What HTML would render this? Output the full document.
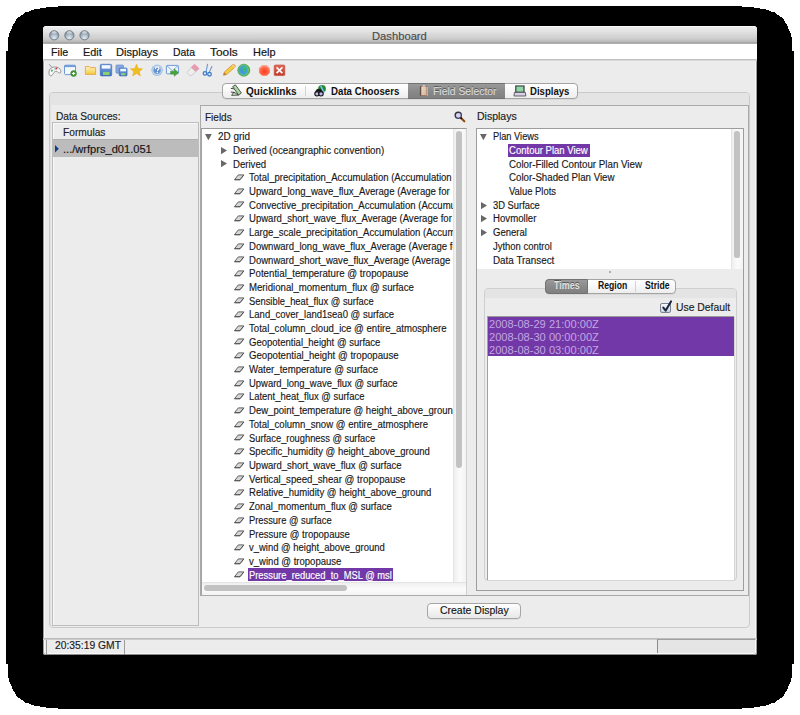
<!DOCTYPE html>
<html><head><meta charset="utf-8"><title>Dashboard</title><style>
html,body{margin:0;padding:0;background:#fff;width:800px;height:715px;overflow:hidden;position:relative;}
.b{position:absolute;box-sizing:border-box;}
.t{position:absolute;white-space:nowrap;line-height:1;font-family:"Liberation Sans",sans-serif;transform-origin:0 0;}
svg{position:absolute;overflow:visible;}
</style></head><body>
<svg style="left:0;top:0" width="800" height="715" shape-rendering="crispEdges"><path d="M58 6H742V7H754V8H760V9H766V10H769V11H771V12H775V13H776V14H777V15H779V16H780V17H782V18H783V19H784V21H785V23H786V24H787V26H788V29H789V31H790V33H791V37H792V51H794V664H792V678H791V682H790V684H789V686H788V689H787V691H786V692H785V694H784V696H783V697H782V698H780V699H779V700H777V701H776V702H775V703H771V704H769V705H766V706H760V707H754V708H742V709H58V708H46V707H40V706H34V705H31V704H29V703H25V702H24V701H23V700H21V699H20V698H18V697H17V696H16V694H15V692H14V691H13V689H12V686H11V684H10V682H9V678H8V664H6V51H8V37H9V33H10V31H11V29H12V26H13V24H14V23H15V21H16V19H17V18H18V17H20V16H21V15H23V14H24V13H25V12H29V11H31V10H34V9H40V8H46V7H58V6Z" fill="#000"/></svg>
<div class="b" style="left:43.00px;top:26.00px;width:714.00px;height:629.00px;background:#ececec;border-radius:4px 4px 3px 3px;box-shadow:inset 1px 0 0 #9a9a9a,inset -1px 0 0 #9a9a9a,inset 0 -1px 0 #8a8a8a,inset 2px 0 0 #f8f8f8,inset -2px 0 0 #f8f8f8,inset 0 -2px 0 #f8f8f8;"></div>
<div class="b" style="left:43.00px;top:26.00px;width:714.00px;height:18.00px;background:linear-gradient(#f0f0f0 0,#e2e2e2 30%,#cdcdcd 70%,#b9b9b9 88%,#a6a6a6 92%,#b4b4b4 100%);border-radius:4px 4px 0 0;box-shadow:inset 0 1px 0 #f8f8f8;"></div>
<svg style="left:0;top:0" width="100" height="44"><defs><radialGradient id="tl" cx=".5" cy=".78" r=".62"><stop offset="0" stop-color="#e4ebf1"/><stop offset=".55" stop-color="#b0bfcb"/><stop offset="1" stop-color="#8796a3"/></radialGradient><linearGradient id="tlh" x1="0" y1="0" x2="0" y2="1"><stop offset="0" stop-color="#fff" stop-opacity=".85"/><stop offset="1" stop-color="#fff" stop-opacity="0"/></linearGradient></defs><circle cx="54.2" cy="35.3" r="4.6" fill="url(#tl)" stroke="#6b7884" stroke-width="0.9"/><ellipse cx="54.2" cy="32.9" rx="2.6" ry="1.6" fill="url(#tlh)"/><circle cx="69.4" cy="35.3" r="4.6" fill="url(#tl)" stroke="#6b7884" stroke-width="0.9"/><ellipse cx="69.4" cy="32.9" rx="2.6" ry="1.6" fill="url(#tlh)"/><circle cx="84.5" cy="35.3" r="4.6" fill="url(#tl)" stroke="#6b7884" stroke-width="0.9"/><ellipse cx="84.5" cy="32.9" rx="2.6" ry="1.6" fill="url(#tlh)"/></svg>
<div class="t" style="left:372.30px;top:31px;font-size:11.5px;color:#4a4a4a;transform:scaleX(0.9745);-webkit-text-stroke:0.15px currentColor;">Dashboard</div>
<div class="b" style="left:43.00px;top:44.00px;width:714.00px;height:15.00px;background:#fff;"></div>
<div class="b" style="left:43.00px;top:59.00px;width:714.00px;height:1.00px;background:#c2c2c2;"></div>
<div class="b" style="left:43.00px;top:60.00px;width:714.00px;height:1.00px;background:#d8d8d8;"></div>
<div class="t" style="left:50.70px;top:47px;font-size:11.8px;color:#151515;transform:scaleX(0.9080);-webkit-text-stroke:0.15px currentColor;-webkit-text-stroke:0.2px #151515;">File</div>
<div class="t" style="left:82.95px;top:47px;font-size:11.8px;color:#151515;transform:scaleX(0.9211);-webkit-text-stroke:0.15px currentColor;-webkit-text-stroke:0.2px #151515;">Edit</div>
<div class="t" style="left:116.25px;top:47px;font-size:11.8px;color:#151515;transform:scaleX(0.9416);-webkit-text-stroke:0.15px currentColor;-webkit-text-stroke:0.2px #151515;">Displays</div>
<div class="t" style="left:173.25px;top:47px;font-size:11.8px;color:#151515;transform:scaleX(0.8835);-webkit-text-stroke:0.15px currentColor;-webkit-text-stroke:0.2px #151515;">Data</div>
<div class="t" style="left:210.00px;top:47px;font-size:11.8px;color:#151515;transform:scaleX(1.0071);-webkit-text-stroke:0.15px currentColor;-webkit-text-stroke:0.2px #151515;">Tools</div>
<div class="t" style="left:252.75px;top:47px;font-size:11.8px;color:#151515;transform:scaleX(0.9279);-webkit-text-stroke:0.15px currentColor;-webkit-text-stroke:0.2px #151515;">Help</div>
<div class="b" style="left:49.00px;top:92.00px;width:701.00px;height:536.00px;border:1px solid #cacaca;border-radius:4px;background:#ececec;box-shadow:inset 1px 1px 1px rgba(0,0,0,.05);"></div>
<div class="b" style="left:50.00px;top:93.00px;width:699.00px;height:12.00px;background:#e4e4e4;border-radius:3px 3px 0 0;"></div>
<div class="b" style="left:222.00px;top:83.00px;width:356.00px;height:16.00px;border:1px solid #a4a4a4;border-radius:4px;background:linear-gradient(#ffffff,#f7f7f7 50%,#ededed);box-shadow:0 0.5px 0.6px rgba(0,0,0,.10);"></div>
<div class="b" style="left:408.00px;top:83.00px;width:97.00px;height:16.00px;background:linear-gradient(#9a9a9a,#8a8a8a 50%,#808080);border-top:1px solid #727272;border-bottom:1px solid #727272;"></div>
<div class="b" style="left:305.00px;top:86.00px;width:1.00px;height:10.00px;background:#d2d2d2;"></div>
<div class="t" style="left:245.60px;top:87px;font-size:10.3px;color:#111;font-weight:bold;transform:scaleX(0.9718);-webkit-text-stroke:0.15px currentColor;-webkit-text-stroke:0;">Quicklinks</div>
<div class="t" style="left:330.60px;top:87px;font-size:10.3px;color:#111;font-weight:bold;transform:scaleX(0.9406);-webkit-text-stroke:0.15px currentColor;-webkit-text-stroke:0;">Data Choosers</div>
<div class="t" style="left:433.00px;top:87px;font-size:10.4px;color:#dadada;-webkit-text-stroke:0.15px currentColor;text-shadow:0 -0.6px 0 #555;">Field Selector</div>
<div class="t" style="left:530.00px;top:87px;font-size:10.3px;color:#111;font-weight:bold;transform:scaleX(0.9296);-webkit-text-stroke:0.15px currentColor;-webkit-text-stroke:0;">Displays</div>
<div class="t" style="left:56.00px;top:112px;font-size:10.3px;color:#202020;transform:scaleX(0.9885);-webkit-text-stroke:0.15px currentColor;">Data Sources:</div>
<div class="b" style="left:52.00px;top:122.00px;width:147.00px;height:504.00px;border:1px solid #bdbdbd;background:#ececec;box-shadow:inset 1px 1px 0 #f8f8f8;"></div>
<div class="t" style="left:62.50px;top:128px;font-size:10.3px;color:#202020;transform:scaleX(0.9895);-webkit-text-stroke:0.15px currentColor;">Formulas</div>
<div class="b" style="left:53.00px;top:139.00px;width:145.00px;height:18.00px;background:#bcbcbc;border-top:1px solid #b0b0b0;"></div>
<svg style="left:55px;top:145px" width="4" height="8"><path d="M0 0L3.8 3.75L0 7.5Z" fill="#133c86"/></svg>
<div class="t" style="left:62.50px;top:145px;font-size:10.3px;color:#151515;transform:scaleX(1.0764);-webkit-text-stroke:0.15px currentColor;">.../wrfprs_d01.051</div>
<div class="b" style="left:200.00px;top:105.00px;width:549.00px;height:491.00px;border:1px solid #a9a9a9;background:#ececec;"></div>
<div class="t" style="left:204.75px;top:113px;font-size:10.2px;color:#202020;transform:scaleX(0.9822);-webkit-text-stroke:0.15px currentColor;">Fields</div>
<div class="t" style="left:476.70px;top:112px;font-size:10.2px;color:#202020;transform:scaleX(1.0323);-webkit-text-stroke:0.15px currentColor;">Displays</div>
<div class="b" style="left:201.00px;top:128.00px;width:266.00px;height:467.00px;border-top:1px solid #9a9a9a;border-left:1px solid #a3a3a3;border-right:1px solid #d0d0d0;background:#fff;"></div>
<div class="b" style="left:453.00px;top:129.00px;width:13.00px;height:453.00px;background:linear-gradient(90deg,#efefef,#fbfbfb 50%,#f3f3f3);border-left:1px solid #e4e4e4;"></div>
<div class="b" style="left:456.00px;top:130.50px;width:6.00px;height:337.50px;background:#c2c2c2;border-radius:3px;"></div>
<div class="b" style="left:202.00px;top:582.00px;width:264.00px;height:13.00px;background:linear-gradient(#efefef,#fbfbfb 50%,#f3f3f3);border-top:1px solid #e4e4e4;"></div>
<div class="b" style="left:204.00px;top:585.00px;width:143.00px;height:6.00px;background:#c2c2c2;border-radius:3px;"></div>
<div class="b" style="left:476.00px;top:128.00px;width:268.00px;height:463.00px;border:1px solid #9d9d9d;background:#ececec;"></div>
<div class="b" style="left:477.00px;top:129.00px;width:266.00px;height:140.00px;background:#fff;"></div>
<div class="b" style="left:731.00px;top:129.00px;width:12.00px;height:140.00px;background:linear-gradient(90deg,#efefef,#fbfbfb 50%,#f3f3f3);border-left:1px solid #e4e4e4;"></div>
<div class="b" style="left:734.00px;top:130.50px;width:6.00px;height:127.50px;background:#c2c2c2;border-radius:2.5px;"></div>
<div class="b" style="left:608.50px;top:271.00px;width:2.00px;height:2.00px;background:#9a9a9a;border-radius:1px;"></div>
<div class="b" style="left:484.00px;top:288.00px;width:253.00px;height:293.00px;border:1px solid #cfcfcf;border-radius:4px;background:#ececec;"></div>
<div class="b" style="left:485.00px;top:289.00px;width:251.00px;height:9.00px;background:#e4e4e4;border-radius:3px 3px 0 0;"></div>
<div class="b" style="left:545.00px;top:279.00px;width:131.00px;height:15.00px;border:1px solid #a4a4a4;border-radius:4px;background:linear-gradient(#ffffff,#f7f7f7 50%,#ededed);box-shadow:0 0.5px 0.6px rgba(0,0,0,.10);"></div>
<div class="b" style="left:545.00px;top:279.00px;width:43.00px;height:15.00px;background:linear-gradient(#9a9a9a,#8a8a8a 50%,#808080);border:1px solid #727272;border-radius:4px 0 0 4px;"></div>
<div class="b" style="left:635.00px;top:281.00px;width:1.00px;height:11.00px;background:#d2d2d2;"></div>
<div class="t" style="left:553.65px;top:281px;font-size:10.2px;color:#e2e2e2;font-weight:bold;transform:scaleX(0.8796);-webkit-text-stroke:0.15px currentColor;-webkit-text-stroke:0;text-shadow:0 -0.6px 0 #555;">Times</div>
<div class="t" style="left:597.75px;top:281px;font-size:10.2px;color:#111;font-weight:bold;transform:scaleX(0.8459);-webkit-text-stroke:0.15px currentColor;-webkit-text-stroke:0;">Region</div>
<div class="t" style="left:644.65px;top:281px;font-size:10.2px;color:#111;font-weight:bold;transform:scaleX(0.8473);-webkit-text-stroke:0.15px currentColor;-webkit-text-stroke:0;">Stride</div>
<div class="b" style="left:660.00px;top:303.00px;width:11.00px;height:10.00px;border:1px solid #7b8591;border-radius:2px;background:linear-gradient(#f7f9fc,#cbd5e0);"></div>
<svg style="left:661px;top:299.5px" width="12" height="13"><path d="M2.3 7.6L4.7 10.6L10 1.4" stroke="#18253d" stroke-width="2" fill="none" stroke-linecap="round" stroke-linejoin="round"/></svg>
<div class="t" style="left:676.00px;top:303px;font-size:10.4px;color:#202020;transform:scaleX(0.9974);-webkit-text-stroke:0.15px currentColor;">Use Default</div>
<div class="b" style="left:487.00px;top:316.00px;width:247.00px;height:264.00px;border-top:1px solid #999;border-left:1px solid #a0a0a0;background:#fff;box-shadow:1px 1px 0 #d6d6d6;"></div>
<div class="b" style="left:488.00px;top:317.00px;width:246.00px;height:39.00px;background:#7338a8;"></div>
<div class="t" style="left:489.00px;top:320px;font-size:10.3px;color:#c2a6e0;transform:scaleX(1.0783);-webkit-text-stroke:0.15px currentColor;-webkit-text-stroke:0;">2008-08-29 21:00:00Z</div>
<div class="t" style="left:489.00px;top:333px;font-size:10.3px;color:#c2a6e0;transform:scaleX(1.0783);-webkit-text-stroke:0.15px currentColor;-webkit-text-stroke:0;">2008-08-30 00:00:00Z</div>
<div class="t" style="left:489.00px;top:346px;font-size:10.3px;color:#c2a6e0;transform:scaleX(1.0783);-webkit-text-stroke:0.15px currentColor;-webkit-text-stroke:0;">2008-08-30 03:00:00Z</div>
<div class="b" style="left:427.00px;top:603.00px;width:94.00px;height:16.00px;border:1px solid #a6a6a6;border-radius:4px;background:linear-gradient(#ffffff,#f3f3f3 50%,#e8e8e8);box-shadow:0 0.5px 0.6px rgba(0,0,0,.12);"></div>
<div class="t" style="left:439.75px;top:606px;font-size:10.4px;color:#151515;transform:scaleX(1.0077);-webkit-text-stroke:0.15px currentColor;">Create Display</div>
<div class="b" style="left:43.00px;top:638.00px;width:714.00px;height:2.00px;background:linear-gradient(#b4b4b4,#d4d4d4);"></div>
<div class="b" style="left:46.00px;top:640.00px;width:79.00px;height:14.00px;border-left:1px solid #9c9c9c;border-right:1px solid #9c9c9c;"></div>
<div class="b" style="left:657.00px;top:639.00px;width:98.00px;height:14.00px;background:#e5e5e5;border-left:1px solid #8c8c8c;border-top:1px solid #a0a0a0;"></div>
<div class="t" style="left:54.80px;top:641px;font-size:10.4px;color:#202020;transform:scaleX(0.9931);-webkit-text-stroke:0.15px currentColor;">20:35:19 GMT</div>
<div style="position:absolute;left:202.4px;top:128.6px;width:250.6px;height:453.4px;overflow:hidden;">
<svg style="left:2.70px;top:5.40px" width="7" height="7"><path d="M0 0H6.8L3.4 6.2Z" fill="#686868"/></svg>
<div class="t" style="left:16.00px;top:3.4000000000000057px;font-size:10px;color:#191919;transform:scaleX(0.9922);-webkit-text-stroke:0.15px currentColor;">2D grid</div>
<svg style="left:18.60px;top:18.10px" width="7" height="8"><path d="M0 0L6 3.6L0 7.2Z" fill="#686868"/></svg>
<div class="t" style="left:31.00px;top:17.400000000000006px;font-size:10px;color:#191919;transform:scaleX(0.9749);-webkit-text-stroke:0.15px currentColor;">Derived (oceangraphic convention)</div>
<svg style="left:18.60px;top:31.80px" width="7" height="8"><path d="M0 0L6 3.6L0 7.2Z" fill="#686868"/></svg>
<div class="t" style="left:31.00px;top:31.400000000000006px;font-size:10px;color:#191919;transform:scaleX(0.9608);-webkit-text-stroke:0.15px currentColor;">Derived</div>
<svg style="left:31.50px;top:45.50px" width="11" height="7"><path d="M4.3 0.9H9.8L6 5.7H0.5Z" fill="#d6d6d6" stroke="#5a5a5a" stroke-width="0.95" stroke-linejoin="round"/><path d="M0.6 5.8H6L9.8 1.2" stroke="#3c3c3c" stroke-width="0.6" fill="none"/></svg>
<div class="t" style="left:46.50px;top:44.400000000000006px;font-size:10px;color:#191919;transform:scaleX(0.9544);-webkit-text-stroke:0.15px currentColor;">Total_precipitation_Accumulation (Accumulation</div>
<svg style="left:31.50px;top:59.20px" width="11" height="7"><path d="M4.3 0.9H9.8L6 5.7H0.5Z" fill="#d6d6d6" stroke="#5a5a5a" stroke-width="0.95" stroke-linejoin="round"/><path d="M0.6 5.8H6L9.8 1.2" stroke="#3c3c3c" stroke-width="0.6" fill="none"/></svg>
<div class="t" style="left:46.50px;top:58.400000000000006px;font-size:10px;color:#191919;transform:scaleX(0.9598);-webkit-text-stroke:0.15px currentColor;">Upward_long_wave_flux_Average (Average for</div>
<svg style="left:31.50px;top:72.90px" width="11" height="7"><path d="M4.3 0.9H9.8L6 5.7H0.5Z" fill="#d6d6d6" stroke="#5a5a5a" stroke-width="0.95" stroke-linejoin="round"/><path d="M0.6 5.8H6L9.8 1.2" stroke="#3c3c3c" stroke-width="0.6" fill="none"/></svg>
<div class="t" style="left:46.50px;top:72.4px;font-size:10px;color:#191919;transform:scaleX(0.9544);-webkit-text-stroke:0.15px currentColor;">Convective_precipitation_Accumulation (Accumulation</div>
<svg style="left:31.50px;top:86.60px" width="11" height="7"><path d="M4.3 0.9H9.8L6 5.7H0.5Z" fill="#d6d6d6" stroke="#5a5a5a" stroke-width="0.95" stroke-linejoin="round"/><path d="M0.6 5.8H6L9.8 1.2" stroke="#3c3c3c" stroke-width="0.6" fill="none"/></svg>
<div class="t" style="left:46.50px;top:85.4px;font-size:10px;color:#191919;transform:scaleX(0.9544);-webkit-text-stroke:0.15px currentColor;">Upward_short_wave_flux_Average (Average for</div>
<svg style="left:31.50px;top:100.30px" width="11" height="7"><path d="M4.3 0.9H9.8L6 5.7H0.5Z" fill="#d6d6d6" stroke="#5a5a5a" stroke-width="0.95" stroke-linejoin="round"/><path d="M0.6 5.8H6L9.8 1.2" stroke="#3c3c3c" stroke-width="0.6" fill="none"/></svg>
<div class="t" style="left:46.50px;top:99.4px;font-size:10px;color:#191919;transform:scaleX(0.9544);-webkit-text-stroke:0.15px currentColor;">Large_scale_precipitation_Accumulation (Accumulation</div>
<svg style="left:31.50px;top:114.00px" width="11" height="7"><path d="M4.3 0.9H9.8L6 5.7H0.5Z" fill="#d6d6d6" stroke="#5a5a5a" stroke-width="0.95" stroke-linejoin="round"/><path d="M0.6 5.8H6L9.8 1.2" stroke="#3c3c3c" stroke-width="0.6" fill="none"/></svg>
<div class="t" style="left:46.50px;top:113.4px;font-size:10px;color:#191919;transform:scaleX(0.9544);-webkit-text-stroke:0.15px currentColor;">Downward_long_wave_flux_Average (Average for</div>
<svg style="left:31.50px;top:127.70px" width="11" height="7"><path d="M4.3 0.9H9.8L6 5.7H0.5Z" fill="#d6d6d6" stroke="#5a5a5a" stroke-width="0.95" stroke-linejoin="round"/><path d="M0.6 5.8H6L9.8 1.2" stroke="#3c3c3c" stroke-width="0.6" fill="none"/></svg>
<div class="t" style="left:46.50px;top:127.4px;font-size:10px;color:#191919;transform:scaleX(0.9544);-webkit-text-stroke:0.15px currentColor;">Downward_short_wave_flux_Average (Average for</div>
<svg style="left:31.50px;top:141.40px" width="11" height="7"><path d="M4.3 0.9H9.8L6 5.7H0.5Z" fill="#d6d6d6" stroke="#5a5a5a" stroke-width="0.95" stroke-linejoin="round"/><path d="M0.6 5.8H6L9.8 1.2" stroke="#3c3c3c" stroke-width="0.6" fill="none"/></svg>
<div class="t" style="left:46.50px;top:140.4px;font-size:10px;color:#191919;transform:scaleX(0.9711);-webkit-text-stroke:0.15px currentColor;">Potential_temperature @ tropopause</div>
<svg style="left:31.50px;top:155.10px" width="11" height="7"><path d="M4.3 0.9H9.8L6 5.7H0.5Z" fill="#d6d6d6" stroke="#5a5a5a" stroke-width="0.95" stroke-linejoin="round"/><path d="M0.6 5.8H6L9.8 1.2" stroke="#3c3c3c" stroke-width="0.6" fill="none"/></svg>
<div class="t" style="left:46.50px;top:154.4px;font-size:10px;color:#191919;transform:scaleX(0.9624);-webkit-text-stroke:0.15px currentColor;">Meridional_momentum_flux @ surface</div>
<svg style="left:31.50px;top:168.80px" width="11" height="7"><path d="M4.3 0.9H9.8L6 5.7H0.5Z" fill="#d6d6d6" stroke="#5a5a5a" stroke-width="0.95" stroke-linejoin="round"/><path d="M0.6 5.8H6L9.8 1.2" stroke="#3c3c3c" stroke-width="0.6" fill="none"/></svg>
<div class="t" style="left:46.50px;top:168.4px;font-size:10px;color:#191919;transform:scaleX(0.9368);-webkit-text-stroke:0.15px currentColor;">Sensible_heat_flux @ surface</div>
<svg style="left:31.50px;top:182.50px" width="11" height="7"><path d="M4.3 0.9H9.8L6 5.7H0.5Z" fill="#d6d6d6" stroke="#5a5a5a" stroke-width="0.95" stroke-linejoin="round"/><path d="M0.6 5.8H6L9.8 1.2" stroke="#3c3c3c" stroke-width="0.6" fill="none"/></svg>
<div class="t" style="left:46.50px;top:181.4px;font-size:10px;color:#191919;transform:scaleX(0.9515);-webkit-text-stroke:0.15px currentColor;">Land_cover_land1sea0 @ surface</div>
<svg style="left:31.50px;top:196.20px" width="11" height="7"><path d="M4.3 0.9H9.8L6 5.7H0.5Z" fill="#d6d6d6" stroke="#5a5a5a" stroke-width="0.95" stroke-linejoin="round"/><path d="M0.6 5.8H6L9.8 1.2" stroke="#3c3c3c" stroke-width="0.6" fill="none"/></svg>
<div class="t" style="left:46.50px;top:195.4px;font-size:10px;color:#191919;transform:scaleX(0.9599);-webkit-text-stroke:0.15px currentColor;">Total_column_cloud_ice @ entire_atmosphere</div>
<svg style="left:31.50px;top:209.90px" width="11" height="7"><path d="M4.3 0.9H9.8L6 5.7H0.5Z" fill="#d6d6d6" stroke="#5a5a5a" stroke-width="0.95" stroke-linejoin="round"/><path d="M0.6 5.8H6L9.8 1.2" stroke="#3c3c3c" stroke-width="0.6" fill="none"/></svg>
<div class="t" style="left:46.50px;top:209.4px;font-size:10px;color:#191919;transform:scaleX(0.9522);-webkit-text-stroke:0.15px currentColor;">Geopotential_height @ surface</div>
<svg style="left:31.50px;top:223.60px" width="11" height="7"><path d="M4.3 0.9H9.8L6 5.7H0.5Z" fill="#d6d6d6" stroke="#5a5a5a" stroke-width="0.95" stroke-linejoin="round"/><path d="M0.6 5.8H6L9.8 1.2" stroke="#3c3c3c" stroke-width="0.6" fill="none"/></svg>
<div class="t" style="left:46.50px;top:222.4px;font-size:10px;color:#191919;transform:scaleX(0.9636);-webkit-text-stroke:0.15px currentColor;">Geopotential_height @ tropopause</div>
<svg style="left:31.50px;top:237.30px" width="11" height="7"><path d="M4.3 0.9H9.8L6 5.7H0.5Z" fill="#d6d6d6" stroke="#5a5a5a" stroke-width="0.95" stroke-linejoin="round"/><path d="M0.6 5.8H6L9.8 1.2" stroke="#3c3c3c" stroke-width="0.6" fill="none"/></svg>
<div class="t" style="left:46.50px;top:236.4px;font-size:10px;color:#191919;transform:scaleX(0.9613);-webkit-text-stroke:0.15px currentColor;">Water_temperature @ surface</div>
<svg style="left:31.50px;top:251.00px" width="11" height="7"><path d="M4.3 0.9H9.8L6 5.7H0.5Z" fill="#d6d6d6" stroke="#5a5a5a" stroke-width="0.95" stroke-linejoin="round"/><path d="M0.6 5.8H6L9.8 1.2" stroke="#3c3c3c" stroke-width="0.6" fill="none"/></svg>
<div class="t" style="left:46.50px;top:250.4px;font-size:10px;color:#191919;transform:scaleX(0.9438);-webkit-text-stroke:0.15px currentColor;">Upward_long_wave_flux @ surface</div>
<svg style="left:31.50px;top:264.70px" width="11" height="7"><path d="M4.3 0.9H9.8L6 5.7H0.5Z" fill="#d6d6d6" stroke="#5a5a5a" stroke-width="0.95" stroke-linejoin="round"/><path d="M0.6 5.8H6L9.8 1.2" stroke="#3c3c3c" stroke-width="0.6" fill="none"/></svg>
<div class="t" style="left:46.50px;top:263.4px;font-size:10px;color:#191919;transform:scaleX(0.9424);-webkit-text-stroke:0.15px currentColor;">Latent_heat_flux @ surface</div>
<svg style="left:31.50px;top:278.40px" width="11" height="7"><path d="M4.3 0.9H9.8L6 5.7H0.5Z" fill="#d6d6d6" stroke="#5a5a5a" stroke-width="0.95" stroke-linejoin="round"/><path d="M0.6 5.8H6L9.8 1.2" stroke="#3c3c3c" stroke-width="0.6" fill="none"/></svg>
<div class="t" style="left:46.50px;top:277.4px;font-size:10px;color:#191919;transform:scaleX(0.9544);-webkit-text-stroke:0.15px currentColor;">Dew_point_temperature @ height_above_ground</div>
<svg style="left:31.50px;top:292.10px" width="11" height="7"><path d="M4.3 0.9H9.8L6 5.7H0.5Z" fill="#d6d6d6" stroke="#5a5a5a" stroke-width="0.95" stroke-linejoin="round"/><path d="M0.6 5.8H6L9.8 1.2" stroke="#3c3c3c" stroke-width="0.6" fill="none"/></svg>
<div class="t" style="left:46.50px;top:291.4px;font-size:10px;color:#191919;transform:scaleX(0.9577);-webkit-text-stroke:0.15px currentColor;">Total_column_snow @ entire_atmosphere</div>
<svg style="left:31.50px;top:305.80px" width="11" height="7"><path d="M4.3 0.9H9.8L6 5.7H0.5Z" fill="#d6d6d6" stroke="#5a5a5a" stroke-width="0.95" stroke-linejoin="round"/><path d="M0.6 5.8H6L9.8 1.2" stroke="#3c3c3c" stroke-width="0.6" fill="none"/></svg>
<div class="t" style="left:46.50px;top:305.4px;font-size:10px;color:#191919;transform:scaleX(0.9323);-webkit-text-stroke:0.15px currentColor;">Surface_roughness @ surface</div>
<svg style="left:31.50px;top:319.50px" width="11" height="7"><path d="M4.3 0.9H9.8L6 5.7H0.5Z" fill="#d6d6d6" stroke="#5a5a5a" stroke-width="0.95" stroke-linejoin="round"/><path d="M0.6 5.8H6L9.8 1.2" stroke="#3c3c3c" stroke-width="0.6" fill="none"/></svg>
<div class="t" style="left:46.50px;top:318.4px;font-size:10px;color:#191919;transform:scaleX(0.9506);-webkit-text-stroke:0.15px currentColor;">Specific_humidity @ height_above_ground</div>
<svg style="left:31.50px;top:333.20px" width="11" height="7"><path d="M4.3 0.9H9.8L6 5.7H0.5Z" fill="#d6d6d6" stroke="#5a5a5a" stroke-width="0.95" stroke-linejoin="round"/><path d="M0.6 5.8H6L9.8 1.2" stroke="#3c3c3c" stroke-width="0.6" fill="none"/></svg>
<div class="t" style="left:46.50px;top:332.4px;font-size:10px;color:#191919;transform:scaleX(0.9490);-webkit-text-stroke:0.15px currentColor;">Upward_short_wave_flux @ surface</div>
<svg style="left:31.50px;top:346.90px" width="11" height="7"><path d="M4.3 0.9H9.8L6 5.7H0.5Z" fill="#d6d6d6" stroke="#5a5a5a" stroke-width="0.95" stroke-linejoin="round"/><path d="M0.6 5.8H6L9.8 1.2" stroke="#3c3c3c" stroke-width="0.6" fill="none"/></svg>
<div class="t" style="left:46.50px;top:346.4px;font-size:10px;color:#191919;transform:scaleX(0.9663);-webkit-text-stroke:0.15px currentColor;">Vertical_speed_shear @ tropopause</div>
<svg style="left:31.50px;top:360.60px" width="11" height="7"><path d="M4.3 0.9H9.8L6 5.7H0.5Z" fill="#d6d6d6" stroke="#5a5a5a" stroke-width="0.95" stroke-linejoin="round"/><path d="M0.6 5.8H6L9.8 1.2" stroke="#3c3c3c" stroke-width="0.6" fill="none"/></svg>
<div class="t" style="left:46.50px;top:359.4px;font-size:10px;color:#191919;transform:scaleX(0.9525);-webkit-text-stroke:0.15px currentColor;">Relative_humidity @ height_above_ground</div>
<svg style="left:31.50px;top:374.30px" width="11" height="7"><path d="M4.3 0.9H9.8L6 5.7H0.5Z" fill="#d6d6d6" stroke="#5a5a5a" stroke-width="0.95" stroke-linejoin="round"/><path d="M0.6 5.8H6L9.8 1.2" stroke="#3c3c3c" stroke-width="0.6" fill="none"/></svg>
<div class="t" style="left:46.50px;top:373.4px;font-size:10px;color:#191919;transform:scaleX(0.9507);-webkit-text-stroke:0.15px currentColor;">Zonal_momentum_flux @ surface</div>
<svg style="left:31.50px;top:388.00px" width="11" height="7"><path d="M4.3 0.9H9.8L6 5.7H0.5Z" fill="#d6d6d6" stroke="#5a5a5a" stroke-width="0.95" stroke-linejoin="round"/><path d="M0.6 5.8H6L9.8 1.2" stroke="#3c3c3c" stroke-width="0.6" fill="none"/></svg>
<div class="t" style="left:46.50px;top:387.4px;font-size:10px;color:#191919;transform:scaleX(0.9333);-webkit-text-stroke:0.15px currentColor;">Pressure @ surface</div>
<svg style="left:31.50px;top:401.70px" width="11" height="7"><path d="M4.3 0.9H9.8L6 5.7H0.5Z" fill="#d6d6d6" stroke="#5a5a5a" stroke-width="0.95" stroke-linejoin="round"/><path d="M0.6 5.8H6L9.8 1.2" stroke="#3c3c3c" stroke-width="0.6" fill="none"/></svg>
<div class="t" style="left:46.50px;top:401.4px;font-size:10px;color:#191919;transform:scaleX(0.9532);-webkit-text-stroke:0.15px currentColor;">Pressure @ tropopause</div>
<svg style="left:31.50px;top:415.40px" width="11" height="7"><path d="M4.3 0.9H9.8L6 5.7H0.5Z" fill="#d6d6d6" stroke="#5a5a5a" stroke-width="0.95" stroke-linejoin="round"/><path d="M0.6 5.8H6L9.8 1.2" stroke="#3c3c3c" stroke-width="0.6" fill="none"/></svg>
<div class="t" style="left:46.50px;top:414.4px;font-size:10px;color:#191919;transform:scaleX(0.9457);-webkit-text-stroke:0.15px currentColor;">v_wind @ height_above_ground</div>
<svg style="left:31.50px;top:429.10px" width="11" height="7"><path d="M4.3 0.9H9.8L6 5.7H0.5Z" fill="#d6d6d6" stroke="#5a5a5a" stroke-width="0.95" stroke-linejoin="round"/><path d="M0.6 5.8H6L9.8 1.2" stroke="#3c3c3c" stroke-width="0.6" fill="none"/></svg>
<div class="t" style="left:46.50px;top:428.4px;font-size:10px;color:#191919;transform:scaleX(0.9536);-webkit-text-stroke:0.15px currentColor;">v_wind @ tropopause</div>
<svg style="left:31.50px;top:442.80px" width="11" height="7"><path d="M4.3 0.9H9.8L6 5.7H0.5Z" fill="#d6d6d6" stroke="#5a5a5a" stroke-width="0.95" stroke-linejoin="round"/><path d="M0.6 5.8H6L9.8 1.2" stroke="#3c3c3c" stroke-width="0.6" fill="none"/></svg>
<div class="b" style="left:45.50px;top:439.90px;width:145.10px;height:12.80px;background:#7338a8;"></div>
<div class="t" style="left:46.50px;top:442.4px;font-size:10px;color:#fff;transform:scaleX(0.9355);-webkit-text-stroke:0.15px currentColor;">Pressure_reduced_to_MSL @ msl</div>
</div>
<svg style="left:479.60px;top:134.00px" width="7" height="7"><path d="M0 0H6.8L3.4 6.2Z" fill="#686868"/></svg>
<div class="t" style="left:493.40px;top:132px;font-size:10px;color:#191919;transform:scaleX(0.9249);-webkit-text-stroke:0.15px currentColor;">Plan Views</div>
<div class="b" style="left:507.80px;top:143.70px;width:82.00px;height:13.80px;background:#7338a8;"></div>
<div class="t" style="left:508.50px;top:146px;font-size:10px;color:#fff;transform:scaleX(0.9528);-webkit-text-stroke:0.15px currentColor;">Contour Plan View</div>
<div class="t" style="left:508.50px;top:160px;font-size:10px;color:#191919;transform:scaleX(0.9736);-webkit-text-stroke:0.15px currentColor;">Color-Filled Contour Plan View</div>
<div class="t" style="left:508.50px;top:173px;font-size:10px;color:#191919;transform:scaleX(0.9697);-webkit-text-stroke:0.15px currentColor;">Color-Shaded Plan View</div>
<div class="t" style="left:508.50px;top:187px;font-size:10px;color:#191919;transform:scaleX(0.9428);-webkit-text-stroke:0.15px currentColor;">Value Plots</div>
<svg style="left:480.80px;top:201.50px" width="7" height="8"><path d="M0 0L6 3.6L0 7.2Z" fill="#686868"/></svg>
<div class="t" style="left:493.40px;top:201px;font-size:10px;color:#191919;transform:scaleX(0.9361);-webkit-text-stroke:0.15px currentColor;">3D Surface</div>
<svg style="left:480.80px;top:215.20px" width="7" height="8"><path d="M0 0L6 3.6L0 7.2Z" fill="#686868"/></svg>
<div class="t" style="left:493.40px;top:214px;font-size:10px;color:#191919;transform:scaleX(0.9633);-webkit-text-stroke:0.15px currentColor;">Hovmoller</div>
<svg style="left:480.80px;top:228.90px" width="7" height="8"><path d="M0 0L6 3.6L0 7.2Z" fill="#686868"/></svg>
<div class="t" style="left:493.40px;top:228px;font-size:10px;color:#191919;transform:scaleX(0.9508);-webkit-text-stroke:0.15px currentColor;">General</div>
<div class="t" style="left:493.40px;top:242px;font-size:10px;color:#191919;transform:scaleX(0.9454);-webkit-text-stroke:0.15px currentColor;">Jython control</div>
<div class="t" style="left:493.40px;top:256px;font-size:10px;color:#191919;transform:scaleX(0.9855);-webkit-text-stroke:0.15px currentColor;">Data Transect</div>
<svg style="left:0;top:0" width="800" height="130" viewBox="0 0 800 130">
<defs>
<linearGradient id="gFold" x1="0" y1="0" x2="0" y2="1"><stop offset="0" stop-color="#fff3c0"/><stop offset="1" stop-color="#f3c93a"/></linearGradient>
<linearGradient id="gBlue" x1="0" y1="0" x2="0" y2="1"><stop offset="0" stop-color="#7aa6e0"/><stop offset="1" stop-color="#3f6fbf"/></linearGradient>
<radialGradient id="gHelp" cx=".5" cy=".5" r=".5"><stop offset="0" stop-color="#4f82c4"/><stop offset=".55" stop-color="#6f9ad2"/><stop offset=".75" stop-color="#c3d7ef"/><stop offset="1" stop-color="#9ab9e0"/></radialGradient>
<radialGradient id="gStop" cx=".5" cy=".6" r=".55"><stop offset="0" stop-color="#ff3a1e"/><stop offset=".7" stop-color="#ff6a4a"/><stop offset="1" stop-color="#f7a595"/></radialGradient>
<linearGradient id="gX" x1="0" y1="0" x2="0" y2="1"><stop offset="0" stop-color="#e06a58"/><stop offset="1" stop-color="#c0392b"/></linearGradient>
<radialGradient id="gGlobe" cx=".45" cy=".5" r=".55"><stop offset="0" stop-color="#3d8fd8"/><stop offset=".6" stop-color="#49a1d6"/><stop offset=".8" stop-color="#66c56a"/><stop offset="1" stop-color="#3fa84a"/></radialGradient>
<linearGradient id="gTab" x1="0" y1="0" x2="1" y2="1"><stop offset="0" stop-color="#f0dcc4"/><stop offset="1" stop-color="#cdb394"/></linearGradient>
</defs>
<!-- 1 gamepad -->
<path d="M49.3 64.3L52.2 67.6" stroke="#8a8a8a" stroke-width="0.9" fill="none"/>
<path d="M50.2 68.8C51.8 67.2 54.5 66.6 57 67.2C59.6 67.8 61.3 70.2 60.8 72.2C60.4 73.6 58.8 73.2 57.8 72.1C56.6 70.9 55 71.2 54 72.5C52.9 74 52.3 75.8 50.8 75.9C49.2 76 48.8 73.8 49 71.9C49.1 70.6 49.5 69.5 50.2 68.8Z" fill="#f7f7f7" stroke="#8c8c8c" stroke-width="0.9"/>
<circle cx="51.9" cy="70.6" r="1.1" fill="#58b060"/>
<circle cx="54.8" cy="69.2" r="1" fill="#a9cdf0"/>
<circle cx="56.4" cy="68.4" r="1" fill="#e03838"/>
<!-- 2 window + -->
<rect x="64.5" y="65.2" width="11" height="9.4" rx="1" fill="#f4f8fd" stroke="#6f9bd8" stroke-width="1"/>
<rect x="64.5" y="65.2" width="11" height="1.9" fill="#6f9bd8"/>
<circle cx="73.6" cy="73.5" r="2.9" fill="#4a9a3a" stroke="#2e7d2a" stroke-width="0.6"/>
<path d="M73.6 71.9V75.1M72 73.5H75.2" stroke="#fff" stroke-width="1.1"/>
<!-- 3 folder -->
<path d="M85.4 66.6H89.3L90.2 67.6H95.6V74.4H85.4Z" fill="url(#gFold)" stroke="#e5a54a" stroke-width="0.9" stroke-linejoin="round"/>
<!-- 4 floppy -->
<rect x="100.3" y="64.3" width="11.4" height="11.6" rx="1.2" fill="url(#gBlue)" stroke="#3c6cbc" stroke-width="0.7"/>
<rect x="101.8" y="65.2" width="8.6" height="3.4" fill="#f4f8ff"/>
<rect x="103" y="71.9" width="6.5" height="3.1" fill="#8fd06a"/>
<!-- 5 multi floppy -->
<rect x="115.9" y="64.9" width="7.6" height="8.4" rx="1" fill="#86a9dc" stroke="#5e86c8" stroke-width="0.6"/>
<rect x="119.2" y="68" width="7.9" height="8" rx="1" fill="url(#gBlue)" stroke="#3c6cbc" stroke-width="0.6"/>
<rect x="120.3" y="68.9" width="5.7" height="2.4" fill="#f4f8ff"/>
<rect x="121" y="73.2" width="4.4" height="2.1" fill="#8fd06a"/>
<!-- 6 star -->
<path d="M136.5 64.2L138.3 68.6L142.6 68.8L139.3 71.6L140.4 75.9L136.5 73.5L132.6 75.9L133.7 71.6L130.4 68.8L134.7 68.6Z" fill="#f2bd1e" stroke="#e8a41a" stroke-width="0.5" stroke-linejoin="round"/>
<!-- 7 help -->
<circle cx="157.1" cy="70.3" r="5.7" fill="url(#gHelp)"/>
<path d="M155.5 68.6C155.5 67.4 156.3 66.8 157.2 66.8C158.2 66.8 158.9 67.5 158.9 68.4C158.9 69.4 157.7 69.6 157.4 70.7" stroke="#fff" stroke-width="1.2" fill="none" stroke-linecap="round"/>
<circle cx="157.3" cy="72.6" r="0.75" fill="#fff"/>
<!-- 8 envelope arrow -->
<rect x="166.4" y="65.4" width="12" height="8.4" rx="0.8" fill="#eef4fc" stroke="#6f9bd8" stroke-width="1"/>
<path d="M166.8 65.8L172.4 70.6L178 65.8" stroke="#7aa3dc" stroke-width="0.9" fill="none"/>
<path d="M170.6 71.2H174.3V69L178.3 72.6L174.3 76.2V74H170.6Z" fill="#4aa238" stroke="#2f8a2a" stroke-width="0.5" stroke-linejoin="round"/>
<!-- 9 eraser -->
<path d="M191.2 67.4L194.6 64.2L199 68.6L195.6 71.8Z" fill="#e99bb2" stroke="#d87893" stroke-width="0.5"/>
<path d="M191.2 67.4L195.6 71.8L191.9 75.4L189.6 75.4L187 72.6Z" fill="#eeeeee" stroke="#b8b8b8" stroke-width="0.6"/>
<!-- 10 scissors -->
<path d="M206 72.2L207.6 64.2M208.9 73L211.9 66.4" stroke="#6a9ad6" stroke-width="1.1" fill="none" stroke-linecap="round"/>
<circle cx="205" cy="73.4" r="1.8" fill="none" stroke="#3f7ccc" stroke-width="1.3"/>
<circle cx="209.5" cy="74.2" r="1.8" fill="none" stroke="#3f7ccc" stroke-width="1.3"/>
<!-- 11 pencil -->
<path d="M223.5 75.2L224.2 72.3L232.3 64.8C233 64.2 234.3 64.4 234.9 65.2C235.4 65.9 235.3 66.8 234.7 67.3L226.5 74.6Z" fill="#f3cf3c" stroke="#d48a3a" stroke-width="0.8" stroke-linejoin="round"/>
<path d="M232.2 64.9L234.8 67.3" stroke="#f0c8a0" stroke-width="1.6"/>
<path d="M223.5 75.2L224.2 72.3L226.5 74.6Z" fill="#c07a3a"/>
<!-- 12 globe -->
<circle cx="243.8" cy="70.2" r="6" fill="url(#gGlobe)" stroke="#48a84c" stroke-width="0.8"/>
<path d="M243 66.6C244.6 66.6 246.4 67.5 247.2 68.6L245.2 69.4L245.8 71.2L243.4 72C242.8 70.4 242 68.8 243 66.6Z" fill="#3cc05a" opacity=".85"/>
<!-- 13 stop -->
<path d="M262 65.1H266.9L270 68.2V72.7L266.9 75.8H262L258.9 72.7V68.2Z" fill="url(#gStop)"/>
<!-- 14 X -->
<rect x="274.2" y="65" width="10.6" height="10.6" rx="1.2" fill="url(#gX)" stroke="#c8483a" stroke-width="0.6"/>
<path d="M277.2 68L281.8 72.6M281.8 68L277.2 72.6" stroke="#fff" stroke-width="1.7" stroke-linecap="square"/>
<!-- tab: quicklinks -->
<path d="M231.6 95.4L233.8 92.2L238.6 95.1Z" fill="#c4e6bc" stroke="#2e2e2e" stroke-width="0.75" stroke-linejoin="round"/>
<path d="M232.6 86.7L235.4 84.8L241.4 93L238.6 95.1Z" fill="#b3deab" stroke="#2e2e2e" stroke-width="0.8" stroke-linejoin="round"/>
<path d="M233.9 86.4L239.8 94.3" stroke="#7fb37a" stroke-width="0.6"/>
<path d="M230.8 88.3L233.8 88.9M230.8 92L234.6 92.5" stroke="#2e2e2e" stroke-width="0.9"/>
<!-- tab: data choosers -->
<circle cx="322" cy="88.8" r="3.9" fill="#1e8d2c"/>
<path d="M320.5 85.6C321.6 86.8 322.2 89 323.2 91.5L324.6 92" stroke="#7cb7e6" stroke-width="1.6" fill="none"/>
<circle cx="317" cy="93.8" r="2.2" fill="#b9b5ea" stroke="#111" stroke-width="1.1"/>
<circle cx="321" cy="93.8" r="2.2" fill="#b9b5ea" stroke="#111" stroke-width="1.1"/>
<path d="M315.6 91.6L317 89.4H320.6L322.2 91.6" fill="#111" stroke="#111" stroke-width="0.8"/>
<!-- tab: field selector -->
<rect x="419.9" y="86.4" width="2" height="9.2" fill="#2a2a2a" opacity=".75"/>
<rect x="421" y="86.4" width="5.8" height="9.2" fill="url(#gTab)" stroke="#9c6a5c" stroke-width="0.75"/>
<rect x="426.8" y="87" width="0.8" height="8.8" fill="#dfe3e6" opacity=".8"/>
<path d="M422.6 86.4C422.8 84.9 424.9 84.9 425.2 86.4" fill="#e4e4e4" stroke="#d0d0d0" stroke-width="0.8"/>
<!-- tab: displays laptop -->
<rect x="515.2" y="85.4" width="9.4" height="7" fill="#3a3a3a"/>
<rect x="516.4" y="86.5" width="7" height="5.2" fill="#90d6a6"/>
<path d="M514.4 92.4H525.4L525.8 96H514Z" fill="#d8d0e8" stroke="#444" stroke-width="0.8"/>
<!-- magnifier -->
<linearGradient id="gMag" x1="0" y1="0" x2="1" y2="1"><stop offset="0" stop-color="#2a2a2a"/><stop offset=".5" stop-color="#3a3a5a"/><stop offset="1" stop-color="#50508a"/></linearGradient>
<circle cx="458.3" cy="115.3" r="3.1" fill="#d4d4f0" stroke="url(#gMag)" stroke-width="1.35"/>
<path d="M461.2 118.2L464.3 121.3" stroke="#8a4a12" stroke-width="2.1" stroke-linecap="round"/>
<path d="M460.6 117.6L461.8 118.8" stroke="#151515" stroke-width="1.8"/>
</svg>
</body></html>
